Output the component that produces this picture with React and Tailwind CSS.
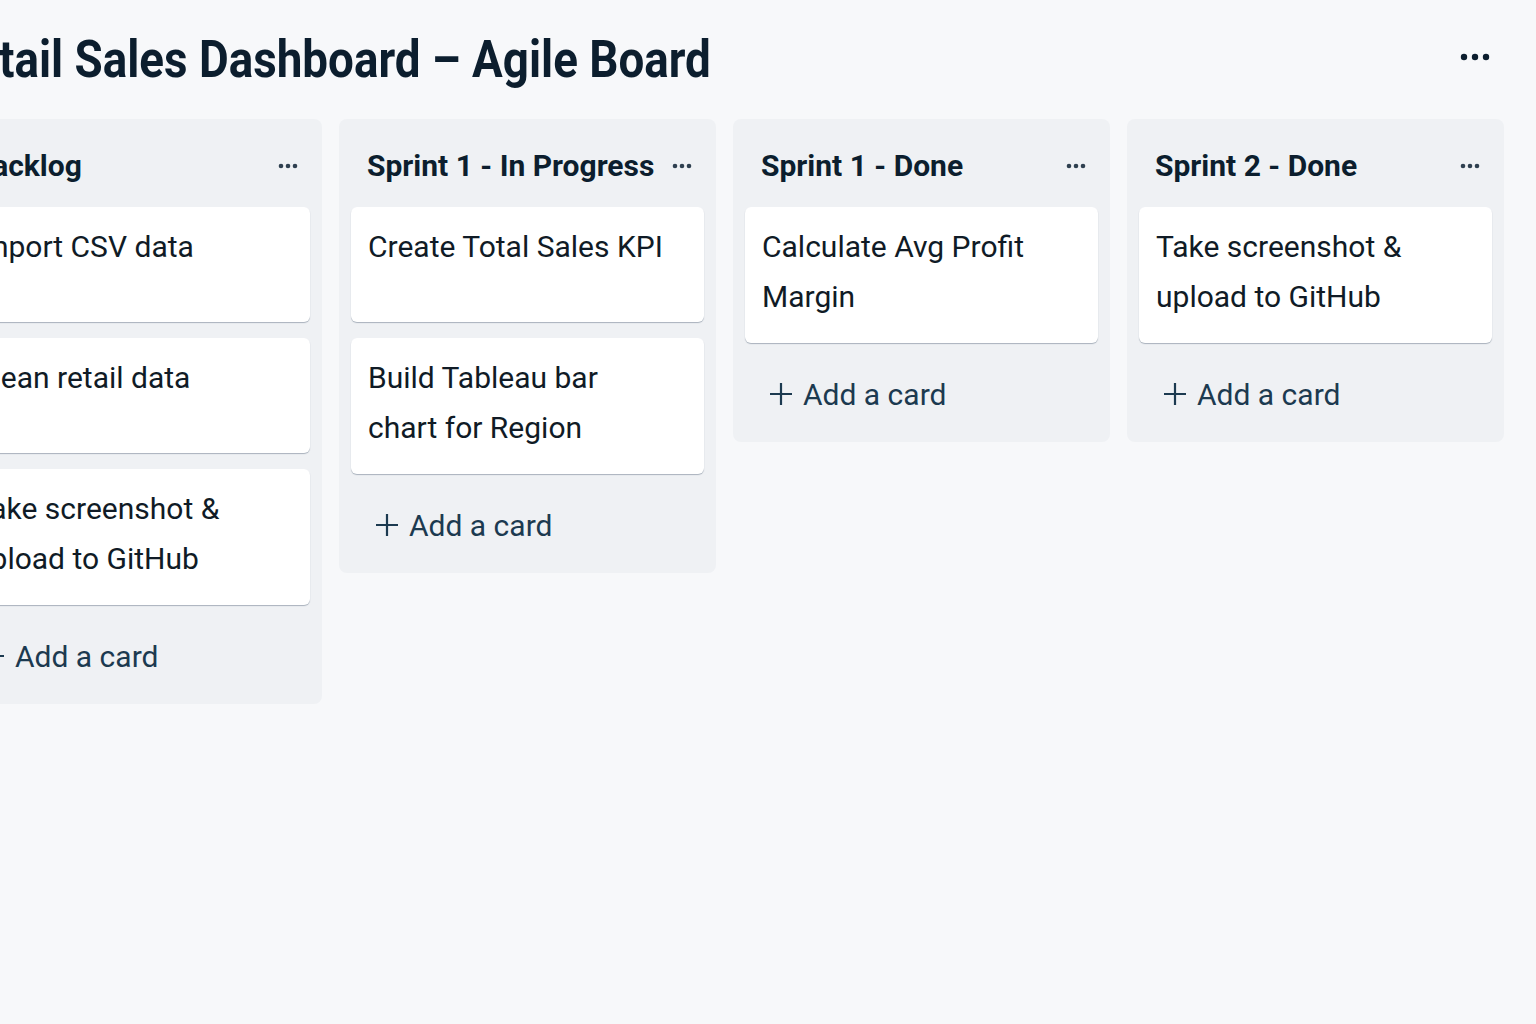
const columns = [
  { title: 'Backlog', cards: ['Import CSV data', 'Clean retail data', 'Take screenshot &\nupload to GitHub'] },
  { title: 'Sprint 1 - In Progress', cards: ['Create Total Sales KPI', 'Build Tableau bar\nchart for Region'] },
  { title: 'Sprint 1 - Done', cards: ['Calculate Avg Profit\nMargin'] },
  { title: 'Sprint 2 - Done', cards: ['Take screenshot &\nupload to GitHub'] },
]

const Dots = ({ big }) =>
  big ? (
    <svg width="30" height="8" viewBox="0 0 30 8" className="text-[#0c1e2e]">
      <circle cx="4" cy="4" r="3.2" fill="currentColor" />
      <circle cx="15" cy="4" r="3.2" fill="currentColor" />
      <circle cx="26" cy="4" r="3.2" fill="currentColor" />
    </svg>
  ) : (
    <svg width="20" height="6" viewBox="0 0 20 6" className="text-[#2f4050]">
      <circle cx="3" cy="3" r="2.3" fill="currentColor" />
      <circle cx="10" cy="3" r="2.3" fill="currentColor" />
      <circle cx="17" cy="3" r="2.3" fill="currentColor" />
    </svg>
  )

const PlusIcon = () => (
  <svg width="24" height="24" viewBox="0 0 24 24" fill="none" stroke="currentColor" strokeWidth="2.2">
    <path d="M12 1v22M1 12h22" />
  </svg>
)

const Column = ({ title, cards }) => (
  <div className="w-[377px] shrink-0 rounded-lg bg-[#eff1f4] px-3 pb-[30px]">
    <div className="flex h-[88px] items-center justify-between pl-4 pr-3 pt-[5px]">
      <h2 className="text-[30px] font-bold leading-none text-[#0c1e2e]">{title}</h2>
      <Dots />
    </div>

    <div className="flex flex-col gap-4">
      {cards.map((card, i) => (
        <div
          key={i}
          className="min-h-[115px] whitespace-pre-line rounded-md bg-white pb-[21px] pl-[17px] pr-4 pt-[15px] text-[30px] leading-[50px] text-[#101b26] shadow-[0_1px_1px_rgba(40,60,85,0.35)]"
        >
          {card}
        </div>
      ))}
    </div>

    <button className="mt-[33px] flex h-9 items-center gap-[10px] pl-6 text-[30px] text-[#1c3a50]">
      <PlusIcon />
      Add a card
    </button>
  </div>
)

export default function App() {
  return (
    <div className="min-h-screen overflow-hidden bg-[#f7f8fa] font-['Roboto',sans-serif]">
      <div className="ml-[-55px] flex flex-col">
        <header className="flex h-[119px] items-center justify-between pr-[46px]">
          <h1 className="origin-left scale-x-[0.88] whitespace-nowrap text-[52px] font-bold leading-none text-[#0c1e2e]">
            Retail Sales Dashboard – Agile Board
          </h1>
          <div className="mb-[6px]">
            <Dots big />
          </div>
        </header>

        <div className="flex items-start gap-[17px]">
          {columns.map((col) => (
            <Column key={col.title} {...col} />
          ))}
        </div>
      </div>
    </div>
  )
}
